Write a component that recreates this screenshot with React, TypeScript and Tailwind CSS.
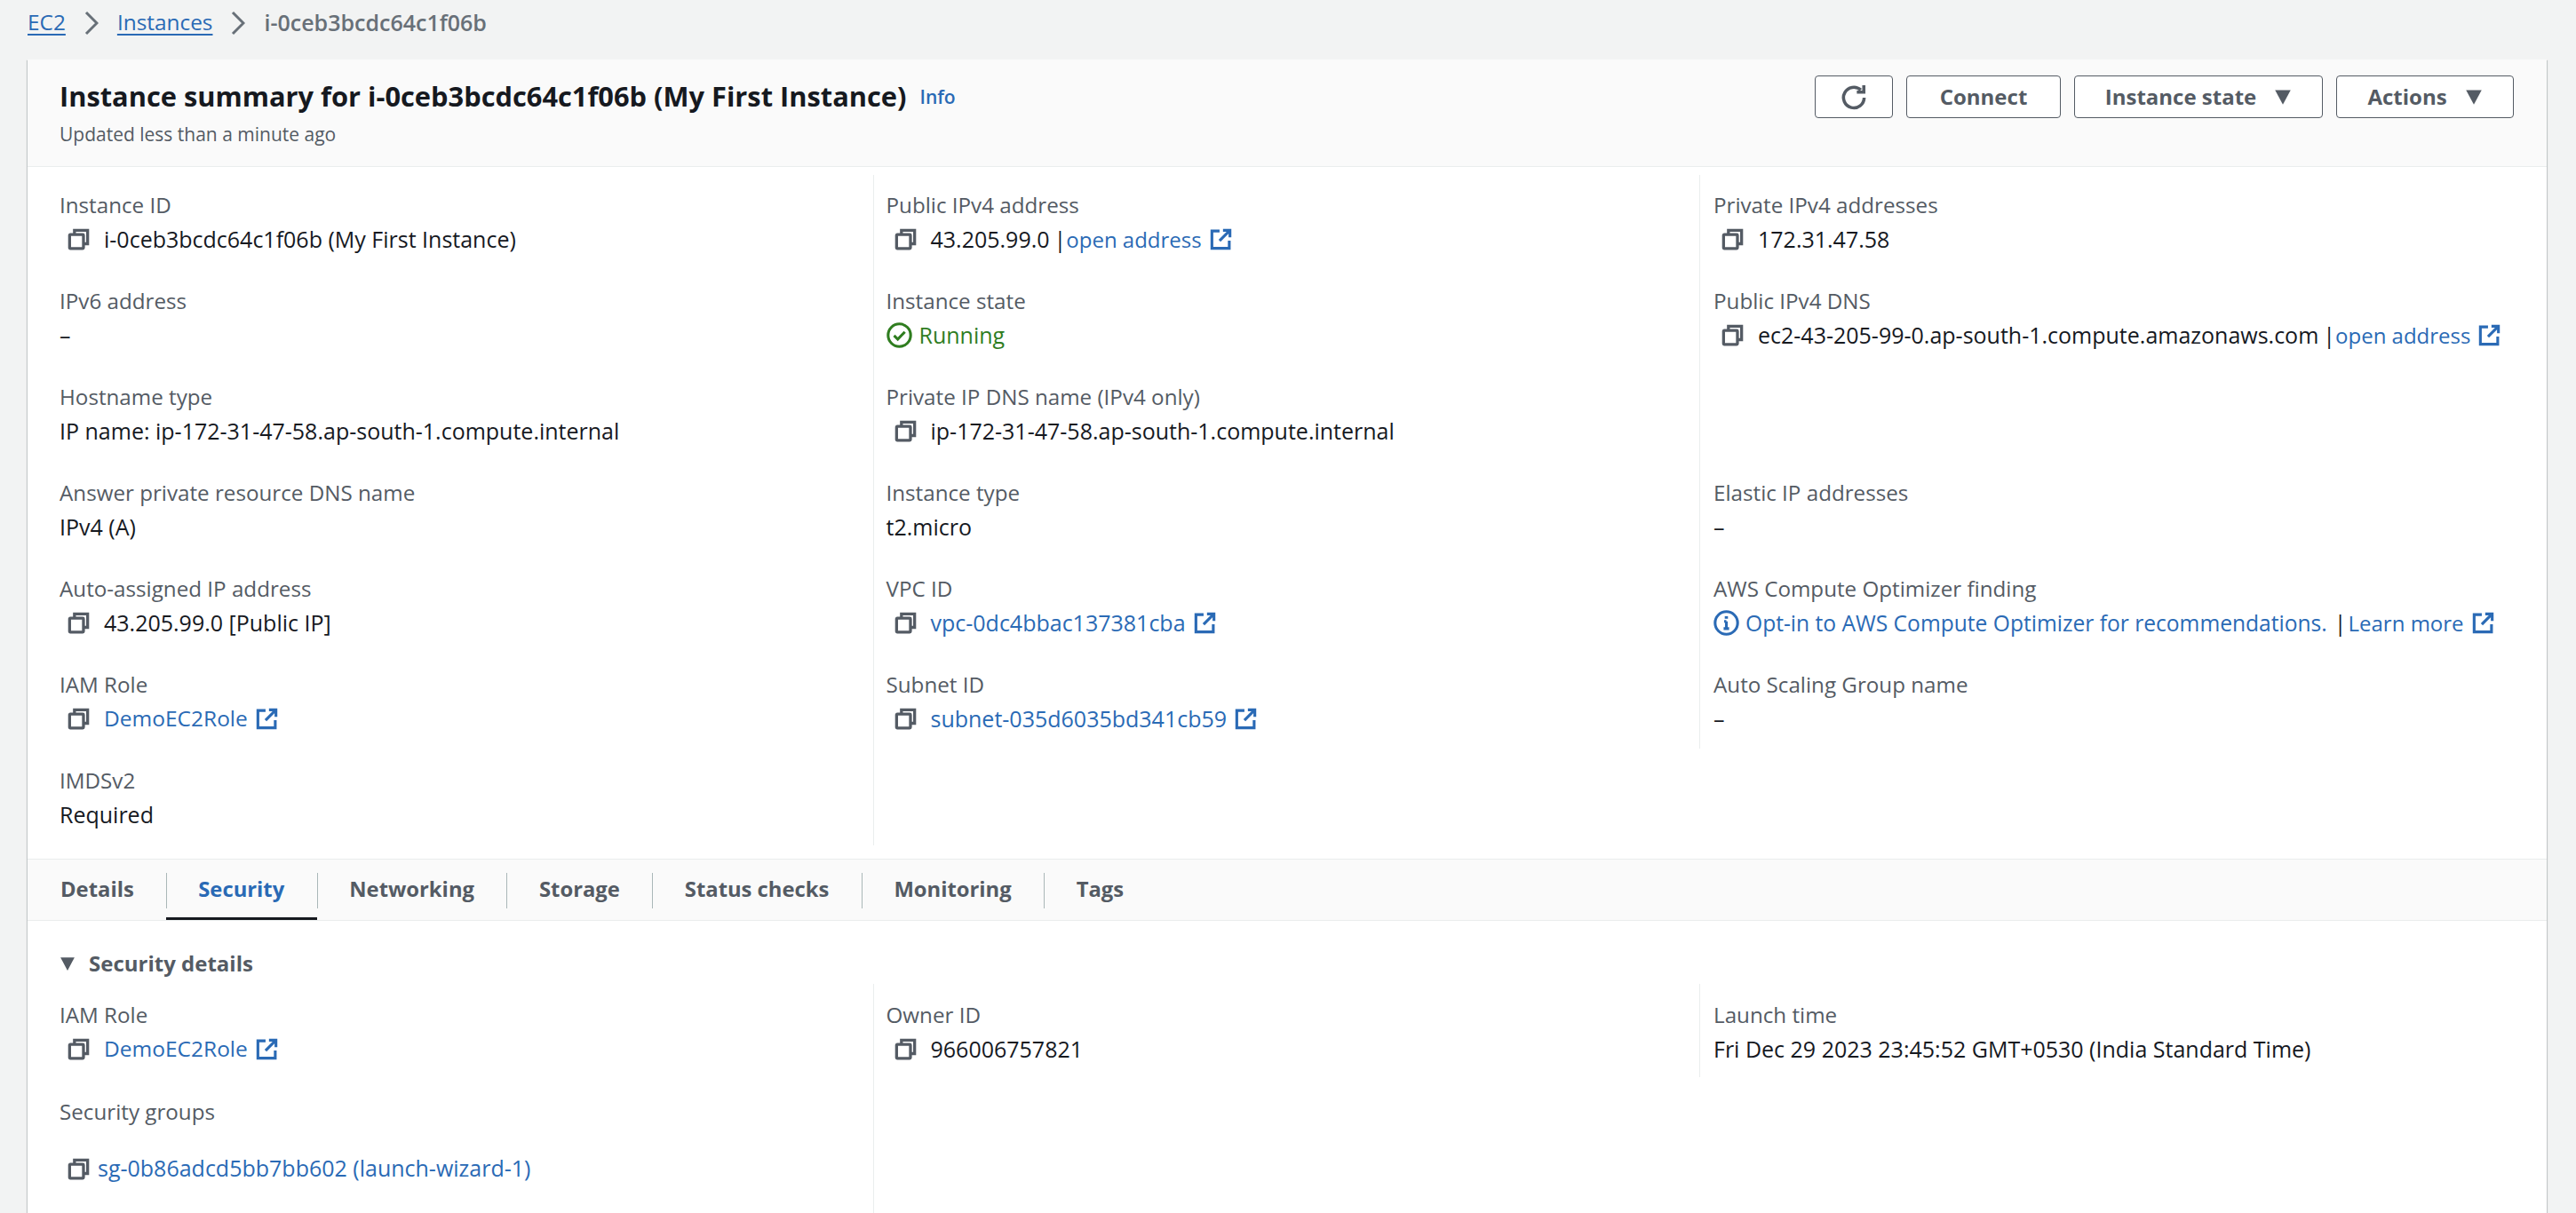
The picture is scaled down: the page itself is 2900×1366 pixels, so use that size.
import type { ReactNode } from 'react';

function CopyIcon() {
  return (
    <svg viewBox="0 0 16 16" className="w-[25px] h-[25px] shrink-0 text-[#545b64]" fill="none" stroke="currentColor" strokeWidth="2.1">
      <path d="M5 4.2V1.5h9.5v9.7h-2.6" />
      <rect x="1.5" y="4.6" width="10" height="10" rx="0.5" />
    </svg>
  );
}

function ExternalIcon() {
  return (
    <svg viewBox="0 0 16 16" className="w-[25px] h-[25px] shrink-0 text-[#2a6ab5]" fill="none" stroke="currentColor" strokeWidth="2">
      <path d="M7 2H1.5v12.5H14V9" />
      <path d="M9.5 1.5h5v5" />
      <path d="M14.5 1.5 7 9" />
    </svg>
  );
}

function RunningIcon() {
  return (
    <svg viewBox="0 0 16 16" className="w-[29px] h-[29px] shrink-0 text-[#2f7d1f]" fill="none" stroke="currentColor" strokeWidth="1.7">
      <circle cx="8" cy="8" r="7" />
      <path d="m4.7 8.2 2.3 2.3 4.4-4.6" />
    </svg>
  );
}

function InfoIcon() {
  return (
    <svg viewBox="0 0 16 16" className="w-[29px] h-[29px] shrink-0 text-[#2a6ab5]" fill="none" stroke="currentColor" strokeWidth="1.7">
      <circle cx="8" cy="8" r="7" />
      <path d="M8 7v4.5M6.3 11.5h3.4M6.6 7H8" />
      <path d="M8 3.8v1.6" strokeWidth="2" />
    </svg>
  );
}

function Caret({ className }: { className: string }) {
  return (
    <svg viewBox="0 0 16 16" className={className} fill="currentColor">
      <path d="M1 2h14L8 15z" />
    </svg>
  );
}

function Chevron() {
  return (
    <svg viewBox="0 0 16 28" className="w-[16px] h-[28px] text-[#687078]" fill="none" stroke="currentColor" strokeWidth="3">
      <path d="m2 2 12 12L2 26" />
    </svg>
  );
}

function Field({ label, children, className = '' }: { label: string; children: ReactNode; className?: string }) {
  return (
    <div className={className}>
      <div className="h-[36px] leading-[36px] text-[24.2px] text-[#545b64]">{label}</div>
      {children}
    </div>
  );
}

function Value({ children }: { children: ReactNode }) {
  return <div className="h-[36px] pt-[5px] flex items-center text-[#16191f] whitespace-nowrap">{children}</div>;
}

function Copyable({ children }: { children: ReactNode }) {
  return (
    <div className="h-[36px] pt-[5px] flex items-center pl-[9px] text-[#16191f] whitespace-nowrap">
      <CopyIcon />
      <div className="ml-[16px] flex items-center">{children}</div>
    </div>
  );
}

function A({ children, className = '' }: { children: ReactNode; className?: string }) {
  return <span className={`text-[#2a6ab5] ${className}`}>{children}</span>;
}

function OpenAddress() {
  return (
    <>
      <span className="ml-[5px]">|</span>
      <A className="text-[24px]">open address</A>
      <span className="ml-[9px]"><ExternalIcon /></span>
    </>
  );
}

const btn = 'h-[48px] flex items-center justify-center border-[1.5px] border-[#545b64] rounded-[4px] font-bold text-[#545b64] bg-white';
const tabs = ['Details', 'Security', 'Networking', 'Storage', 'Status checks', 'Monitoring', 'Tags'];

export default function App() {
  return (
    <div className="h-screen overflow-hidden bg-[#f2f3f3] font-['Open_Sans',sans-serif] text-[25px]">
      <div className="h-[67px] pl-[31px] pb-[16px] flex items-center">
        <span className="text-[24.4px] text-[#2a6ab5] underline underline-offset-4">EC2</span>
        <span className="ml-[21px] mr-[21px] flex"><Chevron /></span>
        <span className="text-[24.4px] text-[#2a6ab5] underline underline-offset-4">Instances</span>
        <span className="ml-[21px] mr-[21px] flex"><Chevron /></span>
        <span className="text-[#687078] font-semibold">i-0ceb3bcdc64c1f06b</span>
      </div>

      <div className="ml-[31px] w-[2836px] bg-white shadow-[0_1px_1px_0_rgba(0,28,36,0.3),1px_1px_1px_0_rgba(0,28,36,0.15),-1px_1px_1px_0_rgba(0,28,36,0.15)]">
        <div className="h-[121px] bg-[#fafafa] border-b border-[#eaeded] pl-[36px] pr-[37px] flex justify-between">
          <div>
            <div className="mt-[19px] flex items-center h-[44px]">
              <span className="text-[30.8px] font-bold text-[#16191f]">Instance summary for i-0ceb3bcdc64c1f06b (My First Instance)</span>
              <span className="ml-[15px] mt-[4px] text-[21px] font-semibold text-[#2a6ab5]">Info</span>
            </div>
            <div className="mt-[6px] text-[21px] text-[#545b64]">Updated less than a minute ago</div>
          </div>
          <div className="mt-[18px] flex gap-[15px] text-[24px]">
            <div className={`${btn} w-[88px]`}>
              <svg viewBox="0 0 16 16" className="w-[30px] h-[30px] text-[#545b64]" fill="none" stroke="currentColor" strokeWidth="1.9">
                <path d="M14.2 8.5a6.2 6.2 0 1 1-2-4.6" />
                <path d="M14 1v4.2H9.8" />
              </svg>
            </div>
            <div className={`${btn} w-[174px]`}>Connect</div>
            <div className={`${btn} w-[280px]`}>
              Instance state
              <Caret className="w-[20px] h-[20px] ml-[20px]" />
            </div>
            <div className={`${btn} w-[200px]`}>
              Actions
              <Caret className="w-[20px] h-[20px] ml-[20px]" />
            </div>
          </div>
        </div>

        <div className="pl-[36px] pt-[9px] pb-[15px] grid grid-cols-[916px_930px_1fr]">
          <div className="pt-[16px] flex flex-col gap-[36px]">
            <Field label="Instance ID"><Copyable>i-0ceb3bcdc64c1f06b (My First Instance)</Copyable></Field>
            <Field label="IPv6 address"><Value>–</Value></Field>
            <Field label="Hostname type"><Value>IP name: ip-172-31-47-58.ap-south-1.compute.internal</Value></Field>
            <Field label="Answer private resource DNS name"><Value>IPv4 (A)</Value></Field>
            <Field label="Auto-assigned IP address"><Copyable>43.205.99.0 [Public IP]</Copyable></Field>
            <Field label="IAM Role">
              <Copyable><A className="text-[24.5px]">DemoEC2Role</A><span className="ml-[9px]"><ExternalIcon /></span></Copyable>
            </Field>
            <Field label="IMDSv2" className="pb-[19px]"><Value>Required</Value></Field>
          </div>

          <div className="pt-[16px] pl-[13.5px] border-l-[1.5px] border-[#eaeded] flex flex-col gap-[36px]">
            <Field label="Public IPv4 address"><Copyable>43.205.99.0<OpenAddress /></Copyable></Field>
            <Field label="Instance state">
              <div className="h-[36px] pt-[5px] flex items-center text-[#2f7d1f]"><RunningIcon /><span className="ml-[8px]">Running</span></div>
            </Field>
            <Field label="Private IP DNS name (IPv4 only)"><Copyable>ip-172-31-47-58.ap-south-1.compute.internal</Copyable></Field>
            <Field label="Instance type"><Value>t2.micro</Value></Field>
            <Field label="VPC ID">
              <Copyable><A>vpc-0dc4bbac137381cba</A><span className="ml-[9px]"><ExternalIcon /></span></Copyable>
            </Field>
            <Field label="Subnet ID">
              <Copyable><A>subnet-035d6035bd341cb59</A><span className="ml-[9px]"><ExternalIcon /></span></Copyable>
            </Field>
          </div>

          <div className="self-start pt-[16px] pb-[18px] pl-[15px] border-l-[1.5px] border-[#eaeded] flex flex-col gap-[36px]">
            <Field label="Private IPv4 addresses"><Copyable>172.31.47.58</Copyable></Field>
            <Field label="Public IPv4 DNS"><Copyable>ec2-43-205-99-0.ap-south-1.compute.amazonaws.com<OpenAddress /></Copyable></Field>
            <div className="h-[72px]" />
            <Field label="Elastic IP addresses"><Value>–</Value></Field>
            <Field label="AWS Compute Optimizer finding">
              <Value>
                <InfoIcon />
                <span className="ml-[7px]"><A className="text-[24.6px]">Opt-in to AWS Compute Optimizer for recommendations.</A></span>
                <span className="ml-[8px] mr-[2px]">|</span>
                <A className="text-[24px]">Learn more</A>
                <span className="ml-[9px]"><ExternalIcon /></span>
              </Value>
            </Field>
            <Field label="Auto Scaling Group name"><Value>–</Value></Field>
          </div>
        </div>

        <div className="h-[70px] bg-[#fafafa] border-y-[1.5px] border-[#eaeded] pl-[37px] flex text-[23.8px]">
          {tabs.map((tab, i) => (
            <div key={tab} className={`relative h-full flex items-center ${i === 0 ? 'pr-[36px]' : 'px-[36.5px]'}`}>
              {i > 0 && <span className="absolute left-0 top-[15px] h-[40px] w-px bg-[#aab7b8]" />}
              {i === 1 && <span className="absolute left-0 right-0 bottom-0 h-[3px] bg-[#16191f]" />}
              <span className={`font-bold ${i === 1 ? 'text-[#2a6ab5]' : 'text-[#545b64]'}`}>{tab}</span>
            </div>
          ))}
        </div>

        <div className="pl-[36px]">
          <div className="mt-[30px] h-[36px] flex items-center text-[24px] font-bold text-[#545b64]">
            <Caret className="w-[18px] h-[18px] mr-[15px]" />
            Security details
          </div>
          <div className="mt-[5px] grid grid-cols-[916px_930px_1fr] h-[300px]">
            <div className="pt-[17px] flex flex-col gap-[37px]">
              <Field label="IAM Role">
                <Copyable><A className="text-[24.5px]">DemoEC2Role</A><span className="ml-[9px]"><ExternalIcon /></span></Copyable>
              </Field>
              <Field label="Security groups">
                <div className="mt-[28px] h-[36px] flex items-center pl-[9px] whitespace-nowrap">
                  <CopyIcon />
                  <span className="ml-[9px]"><A>sg-0b86adcd5bb7bb602 (launch-wizard-1)</A></span>
                </div>
              </Field>
            </div>
            <div className="pt-[17px] pl-[13.5px] border-l-[1.5px] border-[#eaeded]">
              <Field label="Owner ID"><Copyable>966006757821</Copyable></Field>
            </div>
            <div className="self-start pt-[17px] pb-[16px] pl-[15px] border-l-[1.5px] border-[#eaeded]">
              <Field label="Launch time"><Value>Fri Dec 29 2023 23:45:52 GMT+0530 (India Standard Time)</Value></Field>
            </div>
          </div>
        </div>
      </div>
    </div>
  );
}
